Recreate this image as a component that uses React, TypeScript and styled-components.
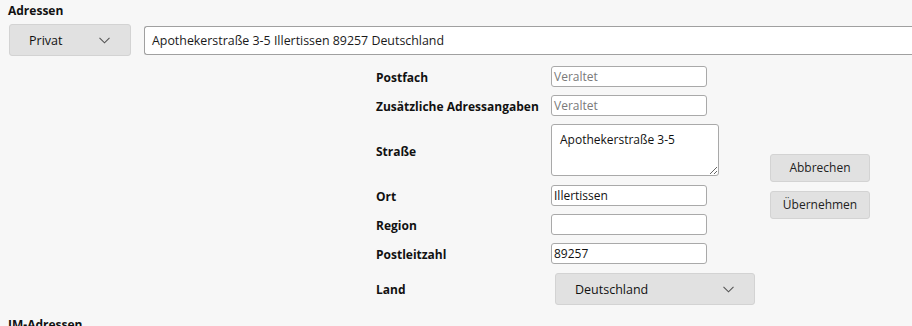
import styled, { createGlobalStyle } from "styled-components"

const GlobalStyle = createGlobalStyle`
   html, body {
      margin: 0;
      padding: 0;
      background: #f7f7f7;
      overflow: hidden;
   }
   body {
      font-family: "Open Sans", "Noto Sans", sans-serif;
      font-size: 12px;
      color: #1a1a1a;
   }
`

const StyledPage = styled.div`
   padding: 3px 8px 0 8px;
   width: 904px;
   box-sizing: border-box;
`

const StyledSectionTitle = styled.h3`
   margin: 0;
   font-size: 12px;
   font-weight: 700;
   line-height: 16px;
   color: #111;
   white-space: nowrap;
`

const StyledTopRow = styled.div`
   display: flex;
   align-items: center;
   gap: 13px;
   margin-top: 5px;
   margin-left: 1px;
`

const StyledSelect = styled.div<{ $width: number }>`
   display: flex;
   align-items: center;
   justify-content: space-between;
   flex-shrink: 0;
   box-sizing: border-box;
   width: ${(p) => p.$width}px;
   height: 32px;
   padding: 0 20px 0 19px;
   background: #e1e1e1;
   border: 1px solid #d3d3d3;
   border-radius: 3px;
   color: #111;
   font-size: 12.5px;
`

const StyledWideInput = styled.div`
   box-sizing: border-box;
   flex: 0 0 auto;
   width: 800px;
   height: 29px;
   padding: 0 7px;
   display: flex;
   align-items: center;
   background: #fff;
   border: 1px solid #a0a0a0;
   border-right: none;
   border-radius: 3px 0 0 3px;
   font-size: 12.4px;
`

const StyledFormArea = styled.div`
   display: flex;
   align-items: center;
   margin-left: 368px;
   margin-top: 10px;
`

const StyledGrid = styled.div`
   display: grid;
   grid-template-columns: 175px 203px;
   row-gap: 8px;
   align-items: center;
`

const StyledLabel = styled.label`
   font-weight: 700;
   font-size: 12px;
   color: #111;
   line-height: 16px;
   padding-top: 2px;
   white-space: nowrap;
`

const StyledInput = styled.div<{ $placeholder?: boolean }>`
   box-sizing: border-box;
   width: 156px;
   height: 21px;
   padding: 0 2px;
   display: flex;
   align-items: center;
   background: #fff;
   border: 1px solid #a9a9a9;
   border-radius: 3px;
   font-size: 12px;
   color: ${(p) => (p.$placeholder ? "#7a7a7a" : "#111")};
`

const StyledTextArea = styled.textarea`
   box-sizing: border-box;
   width: 168px;
   height: 52px;
   padding: 6px 8px;
   margin: 0 0 1px 0;
   background: #fff;
   border: 1px solid #a9a9a9;
   border-radius: 3px;
   font-family: "Open Sans", "Noto Sans", sans-serif;
   font-size: 12px;
   color: #111;
   resize: both;
   outline: none;
   display: block;
`

const StyledSelectCell = styled.div`
   padding-left: 4px;
   margin-top: 1px;
`

const StyledButtons = styled.div`
   display: flex;
   flex-direction: column;
   gap: 9px;
   margin-left: 16px;
   margin-top: 1px;
`

const StyledButton = styled.button`
   box-sizing: border-box;
   width: 100px;
   height: 28px;
   background: #e1e1e1;
   border: 1px solid #d3d3d3;
   border-radius: 3px;
   font-family: "Open Sans", "Noto Sans", sans-serif;
   font-size: 12px;
   color: #222;
   padding: 0;
`

const StyledNextTitle = styled(StyledSectionTitle)`
   margin-top: 12px;
`

const Chevron = () => (
   <svg width="11" height="7" viewBox="0 0 11 7">
      <polyline points="0.5,0.8 5.5,5.8 10.5,0.8" fill="none" stroke="#555" strokeWidth="1.1" />
   </svg>
)

const fields = [
   { label: "Postfach", value: "Veraltet", placeholder: true },
   { label: "Zusätzliche Adressangaben", value: "Veraltet", placeholder: true },
]

const lowerFields = [
   { label: "Ort", value: "Illertissen" },
   { label: "Region", value: "" },
   { label: "Postleitzahl", value: "89257" },
]

const App = () => {
   return (
      <>
         <GlobalStyle />
         <StyledPage>
            <StyledSectionTitle>Adressen</StyledSectionTitle>
            <StyledTopRow>
               <StyledSelect $width={122}>
                  Privat
                  <Chevron />
               </StyledSelect>
               <StyledWideInput>Apothekerstraße 3-5 Illertissen 89257 Deutschland</StyledWideInput>
            </StyledTopRow>
            <StyledFormArea>
               <StyledGrid>
                  {fields.map((f) => (
                     <>
                        <StyledLabel key={f.label}>{f.label}</StyledLabel>
                        <StyledInput $placeholder={f.placeholder}>{f.value}</StyledInput>
                     </>
                  ))}
                  <StyledLabel>Straße</StyledLabel>
                  <StyledTextArea defaultValue="Apothekerstraße 3-5" />
                  {lowerFields.map((f) => (
                     <>
                        <StyledLabel key={f.label}>{f.label}</StyledLabel>
                        <StyledInput>{f.value}</StyledInput>
                     </>
                  ))}
                  <StyledLabel>Land</StyledLabel>
                  <StyledSelectCell>
                     <StyledSelect $width={200}>
                        Deutschland
                        <Chevron />
                     </StyledSelect>
                  </StyledSelectCell>
               </StyledGrid>
               <StyledButtons>
                  <StyledButton>Abbrechen</StyledButton>
                  <StyledButton>Übernehmen</StyledButton>
               </StyledButtons>
            </StyledFormArea>
            <StyledNextTitle>IM-Adressen</StyledNextTitle>
         </StyledPage>
      </>
   )
}

export default App
